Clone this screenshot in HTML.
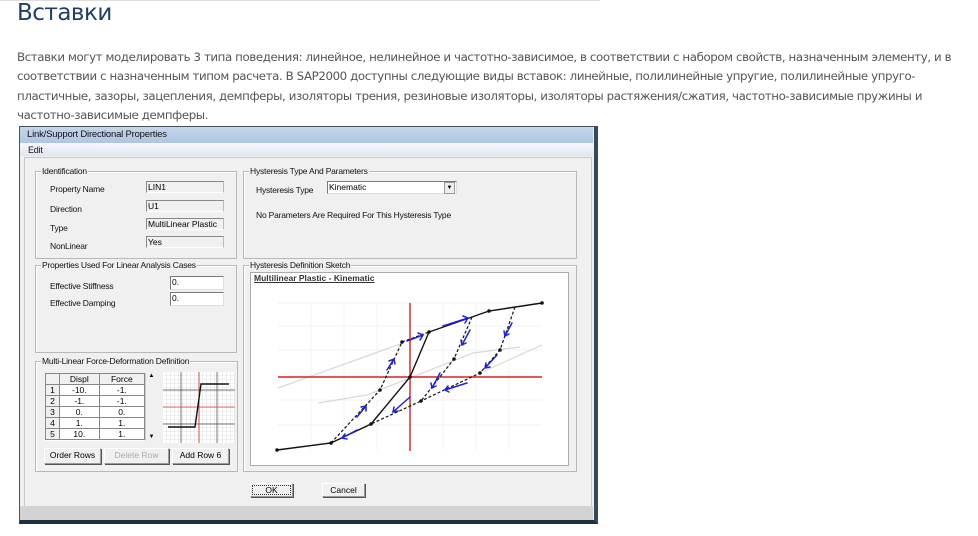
<!DOCTYPE html>
<html><head><meta charset="utf-8"><style>
body{margin:0;width:978px;height:536px;background:#fff;position:relative;overflow:hidden;font-family:"Liberation Sans",sans-serif}
.a{position:absolute}
h1{position:absolute;left:17px;top:0px;margin:0;font-weight:normal;font-size:23px;color:#1f3f68;font-family:"DejaVu Sans","Liberation Sans",sans-serif;letter-spacing:-0.5px}
.p{position:absolute;left:17px;top:48px;width:958px;font-size:11.8px;line-height:19.3px;color:#555;font-family:"DejaVu Sans","Liberation Sans",sans-serif;letter-spacing:-0.4px}
.w{font-size:8.5px;color:#111;letter-spacing:-0.2px;white-space:nowrap}
.g{position:absolute;border:1px solid #b8b8b8;box-shadow:inset 1px 1px 0 #fff}
.gl{position:absolute;top:-6px;left:5px;background:#f0f0f0;padding:0 1px;font-size:8.5px;color:#111;white-space:nowrap;letter-spacing:-0.2px}
.f{position:absolute;background:#f0f0f0;border-top:1px solid #888;border-left:1px solid #888;border-right:1px solid #bbb;border-bottom:1px solid #fff;font-size:8.5px;padding-left:1px;line-height:10px}
.i{position:absolute;background:#fff;border-top:1px solid #777;border-left:1px solid #777;border-right:1px solid #ddd;border-bottom:1px solid #ddd;font-size:8.5px;padding-left:1px;line-height:11px}
.b{position:absolute;background:#f0f0f0;border:1px solid #999;border-top-color:#fff;border-left-color:#fff;box-shadow:1px 1px 0 #555;font-size:8.5px;text-align:center;line-height:13px}
table{border-collapse:collapse;font-size:8.5px}
td{border:1px solid #888;height:10px;padding:0;text-align:center;line-height:10px;background:#fff}
</style></head><body>
<div class="a" style="left:0;top:0;width:600px;height:1px;background:#ddd"></div>
<h1>Вставки</h1>
<div class="p">Вставки могут моделировать 3 типа поведения: линейное, нелинейное и частотно-зависимое, в соответствии с набором свойств, назначенным элементу, и в соответствии с назначенным типом расчета. В SAP2000 доступны следующие виды вставок: линейные, полилинейные упругие, полилинейные упруго-пластичные, зазоры, зацепления, демпферы, изоляторы трения, резиновые изоляторы, изоляторы растяжения/сжатия, частотно-зависимые пружины и частотно-зависимые демпферы.</div>

<div class="a" style="left:18px;top:125px;width:582px;height:409px;background:#fff"></div>
<div class="a" style="left:19px;top:126px;width:574px;height:393px;background:#f0f0f0;border:1px solid #456;border-right:4px solid #34495a;border-bottom:4px solid #1e3040"></div>
<div class="a" style="left:20px;top:127px;width:573px;height:16px;background:linear-gradient(#c5d6ea,#aec6e2)"></div>
<div class="a w" style="left:27px;top:129px;font-size:9.5px">Link/Support Directional Properties</div>
<div class="a" style="left:20px;top:143px;width:573px;height:13px;background:linear-gradient(#f6f8fb,#dfe6ef)"></div>
<div class="a w" style="left:28px;top:145px;font-size:9px">Edit</div>
<div class="a" style="left:24px;top:157px;width:566px;height:348px;border:1px solid #c8c8c8;background:#f0f0f0"></div>
<div class="a" style="left:20px;top:506px;width:573px;height:14px;background:#d3d3d3"></div>

<div class="g" style="left:35px;top:171px;width:200px;height:86px"><span class="gl">Identification</span></div>
<div class="a w" style="left:50px;top:184px">Property Name</div>
<div class="a w" style="left:50px;top:204px">Direction</div>
<div class="a w" style="left:50px;top:223px">Type</div>
<div class="a w" style="left:50px;top:241px">NonLinear</div>
<div class="f" style="left:146px;top:181px;width:75px;height:10px">LIN1</div>
<div class="f" style="left:146px;top:200px;width:75px;height:10px">U1</div>
<div class="f" style="left:146px;top:218px;width:75px;height:10px">MultiLinear Plastic</div>
<div class="f" style="left:146px;top:236px;width:75px;height:10px">Yes</div>

<div class="g" style="left:35px;top:265px;width:200px;height:86px"><span class="gl">Properties Used For Linear Analysis Cases</span></div>
<div class="a w" style="left:50px;top:281px">Effective Stiffness</div>
<div class="a w" style="left:50px;top:298px">Effective Damping</div>
<div class="i" style="left:170px;top:276px;width:51px;height:12px">0.</div>
<div class="i" style="left:170px;top:292px;width:51px;height:12px">0.</div>

<div class="g" style="left:35px;top:361px;width:201px;height:109px"><span class="gl">Multi-Linear Force-Deformation Definition</span></div>
<div class="a" style="left:45px;top:373px;width:112px;height:68px;background:#fff;overflow:hidden">
<table style="width:100px">
<tr><td style="width:13px;background:#f0f0f0"></td><td style="background:#f0f0f0">Displ</td><td style="background:#f0f0f0">Force</td></tr>
<tr><td style="background:#f0f0f0">1</td><td>-10.</td><td>-1.</td></tr>
<tr><td style="background:#f0f0f0">2</td><td>-1.</td><td>-1.</td></tr>
<tr><td style="background:#f0f0f0">3</td><td>0.</td><td>0.</td></tr>
<tr><td style="background:#f0f0f0">4</td><td>1.</td><td>1.</td></tr>
<tr><td style="background:#f0f0f0">5</td><td>10.</td><td>1.</td></tr>
</table>
<div class="a" style="left:100px;top:0;width:11px;height:68px;background:#f0f0f0;border-left:1px solid #ccc;font-size:6px;text-align:center">▲<div style="position:absolute;bottom:1px;width:11px">▼</div></div>
</div>
<svg class="a" style="left:163px;top:372px" width="72" height="71">
<defs><pattern id="gp" width="4" height="4" patternUnits="userSpaceOnUse"><path d="M4 0V4H0" fill="none" stroke="#c8c8c8" stroke-width="0.6"/></pattern></defs>
<rect width="72" height="71" fill="#fff"/><rect width="72" height="71" fill="url(#gp)"/>
<path d="M18 0V71M36 0V71M54 0V71M0 18H72M0 52H72" stroke="#444" stroke-width="0.7"/>
<path d="M36 0V71M0 35H72" stroke="#d44" stroke-width="0.8"/>
<path d="M5 55H32L38 12H66" fill="none" stroke="#111" stroke-width="1.4"/>
</svg>
<div class="b" style="left:44px;top:448px;width:55px;height:14px">Order Rows</div>
<div class="b" style="left:104px;top:448px;width:63px;height:14px;color:#aaa">Delete Row</div>
<div class="b" style="left:172px;top:448px;width:55px;height:14px">Add Row 6</div>

<div class="g" style="left:243px;top:171px;width:332px;height:86px"><span class="gl">Hysteresis Type And Parameters</span></div>
<div class="a w" style="left:256px;top:185px">Hysteresis Type</div>
<div class="i" style="left:327px;top:181px;width:127px;height:11px">Kinematic<span style="position:absolute;right:1px;top:0;width:9px;height:10px;background:#eee;border:1px solid #999;font-size:6px;text-align:center;line-height:10px">▼</span></div>
<div class="a w" style="left:256px;top:210px">No Parameters Are Required For This Hysteresis Type</div>

<div class="g" style="left:243px;top:265px;width:332px;height:205px"><span class="gl">Hysteresis Definition Sketch</span></div>
<div class="a" style="left:250px;top:272px;width:317px;height:192px;background:#fff;border:1px solid #aaa"></div>
<div class="a" style="left:254px;top:273px;font-size:8.5px;font-weight:bold;text-decoration:underline;color:#333">Multilinear Plastic - Kinematic</div>
<svg class="a" style="left:0;top:0" width="978" height="536">
<g stroke="#eee" stroke-width="0.7"><path d="M278 303H542M278 326H542M278 350H542M278 400H542M278 425H542M311 303V450M344 303V450M377 303V450M443 303V450M476 303V450M509 303V450"/></g>
<g stroke="#d8d8d8" stroke-width="1.2" fill="none"><path d="M278 388L403 343M318 403L367 395L473 353L520 347M480 373L542 345"/></g>
<path d="M410 303V451M278 377H542" stroke="#d62020" stroke-width="1.4"/>
<path d="M277 450L331 443L371 424L410 377L429 332L472 317L489 311L542 303" fill="none" stroke="#111" stroke-width="1.4"/>
<g fill="none" stroke="#111" stroke-width="1.2" stroke-dasharray="3,2"><path d="M331 443L380 390L402 342L429 332M472 317L454 359L421 401L371 424M515 307L500 350L480 373L421 401"/></g>
<g fill="#111"><circle cx="277" cy="450" r="1.8"/><circle cx="331" cy="443" r="1.8"/><circle cx="371" cy="424" r="1.8"/><circle cx="410" cy="377" r="1.8"/><circle cx="429" cy="332" r="1.8"/><circle cx="489" cy="311" r="1.8"/><circle cx="542" cy="303" r="1.8"/><circle cx="380" cy="390" r="1.8"/><circle cx="402" cy="342" r="1.8"/><circle cx="454" cy="359" r="1.8"/><circle cx="421" cy="401" r="1.8"/><circle cx="500" cy="350" r="1.8"/><circle cx="480" cy="373" r="1.8"/></g>
<g stroke="#2222cc" stroke-width="1.5" fill="none" stroke-linecap="round"><path d="M407 341L423 335M418 333L423 335L420 340M443 326L468 318M463 316L468 318L465 323M387 370L394 359M389 361L394 359L395 364M357 417L366 406M361 407L366 406L366 411M357 430L342 438M345 434L342 438L347 439M470 330L462 345M461 340L462 345L466 343M440 373L432 388M431 383L432 388L436 386M467 383L445 390M448 386L445 390L449 392M410 397L393 412M394 407L393 412L398 411M512 323L505 336M504 331L505 336L509 334M497 355L485 368M486 363L485 368L490 367"/></g>
</svg>

<div class="b" style="left:250px;top:483px;width:41px;height:12px;line-height:12px;outline:1px dotted #333;outline-offset:-3px">OK</div>
<div class="b" style="left:322px;top:483px;width:41px;height:12px;line-height:12px">Cancel</div>
</body></html>
